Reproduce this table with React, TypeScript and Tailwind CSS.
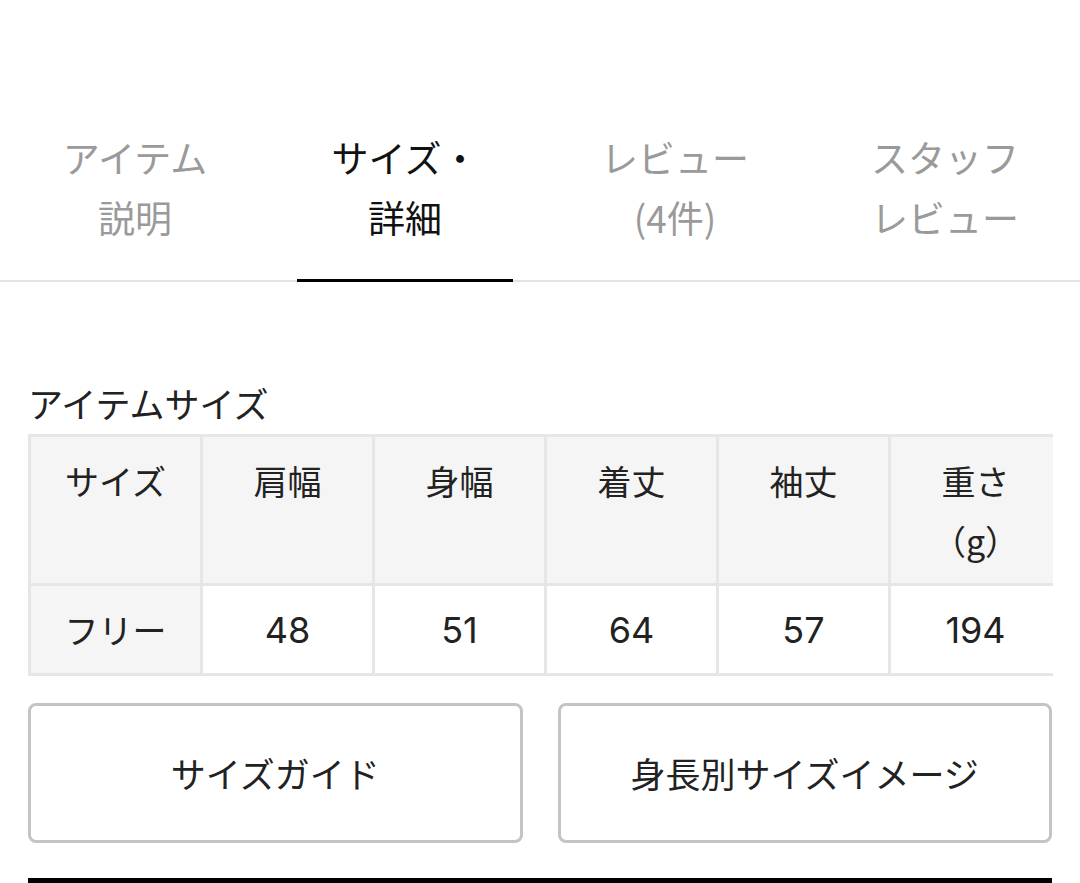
const tabs = [
  { id: "item", lines: ["アイテム", "説明"], active: false },
  { id: "size", lines: ["サイズ・", "詳細"], active: true },
  { id: "review", lines: ["レビュー", "(4件)"], active: false },
  { id: "staff", lines: ["スタッフ", "レビュー"], active: false },
];

const headers = ["サイズ", "肩幅", "身幅", "着丈", "袖丈", "重さ（g）"];
const values = ["フリー", "48", "51", "64", "57", "194"];

export default function App() {
  return (
    <div className="h-[883px] w-[1080px] overflow-hidden bg-white font-['Noto_Sans_CJK_JP','Noto_Sans',sans-serif] text-[#222]">
      <nav className="relative grid grid-cols-4 pt-[127px]">
        { tabs.map((tab) => (
          <div key={ tab.id } className="relative z-10 flex flex-col">
            <div
              className={ `pb-[32px] text-center text-[37px] leading-[60px] ${ tab.active ? "text-[#111]" : "text-[#9a9a9a]" }` }
            >
              { tab.lines.map((line) => (
                <p key={ line }>{ line }</p>
              )) }
            </div>
            <div className={ `mx-[27px] h-[3px] ${ tab.active ? "bg-black" : "bg-transparent" }` } />
          </div>
        )) }
        <div className="absolute bottom-0 left-0 right-0 h-[2px] bg-[#e3e3e3]" />
      </nav>

      <section className="px-[28px] pt-[97px]">
        <h2 className="text-[35px] leading-[48px] text-[#222]">アイテムサイズ</h2>
        <div className="mt-[7px] w-[1025px] overflow-hidden">
          <table className="w-[1034px] table-fixed border-collapse text-[34px]">
            <tbody>
              <tr className="h-[149px]">
                { headers.map((header) => (
                  <th
                    key={ header }
                    className="w-[172px] border-[3px] border-[#e6e6e6] bg-[#f5f5f5] px-4 pt-[14px] align-top font-normal leading-[60px]"
                  >
                    { header === "重さ（g）" ? (
                      <>
                        <span className="block">重さ</span>
                        <span className="block">（g）</span>
                      </>
                    ) : header }
                  </th>
                )) }
              </tr>
              <tr className="h-[90px]">
                { values.map((value, index) => (
                  <td
                    key={ `${ value }-${ index }` }
                    className={ index === 0
                      ? "border-[3px] border-[#e6e6e6] bg-[#f5f5f5] text-center align-middle leading-[60px]"
                      : "border-[3px] border-[#e6e6e6] bg-white text-center align-middle font-['Inter',sans-serif] text-[36px] leading-[60px]" }
                  >
                    { value }
                  </td>
                )) }
              </tr>
            </tbody>
          </table>
        </div>

        <div className="mt-[27px] grid grid-cols-2 gap-[35px]">
          <button className="flex h-[140px] items-center justify-center rounded-[8px] border-[3px] border-[#c4c4c4] bg-white text-[35px] text-[#222]">
            サイズガイド
          </button>
          <button className="flex h-[140px] items-center justify-center rounded-[8px] border-[3px] border-[#c4c4c4] bg-white text-[35px] text-[#222]">
            身長別サイズイメージ
          </button>
        </div>

        <div className="mt-[35px] h-[6px] bg-black" />
      </section>
    </div>
  );
}
